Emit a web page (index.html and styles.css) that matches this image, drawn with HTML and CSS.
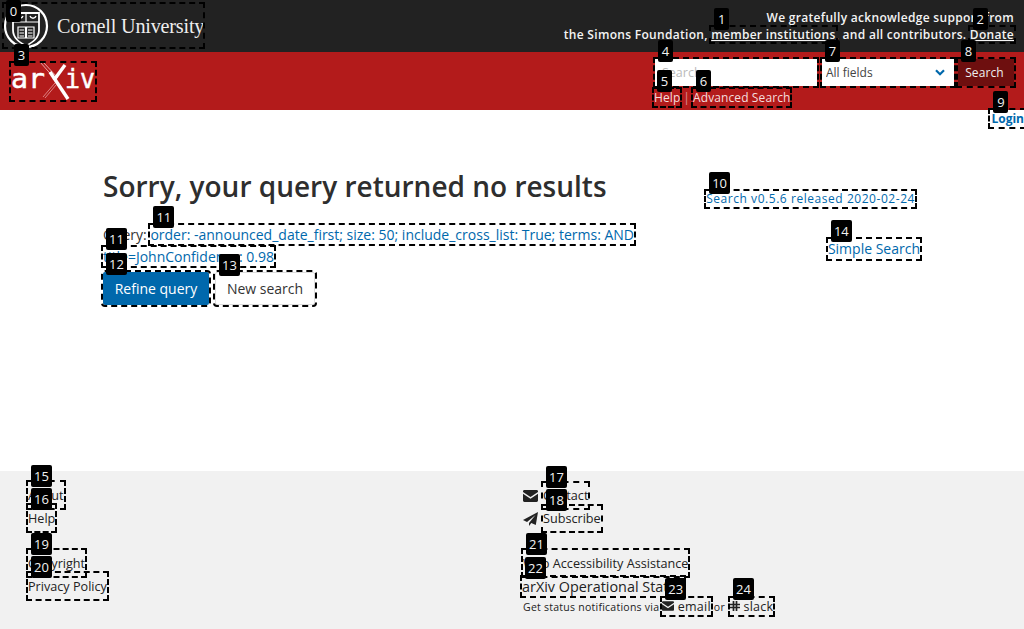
FILE: index.html
```html
<!DOCTYPE html>
<html lang="en">
<head>
<meta charset="utf-8">
<title>Search | arXiv e-print repository</title>
<link rel="stylesheet" href="styles.css">
</head>
<body>
<header class="site-head">
  <div class="top-bar">
    <a class="mark cornell" href="#"><span class="badge">0</span>
      <svg class="seal" width="46" height="46" viewBox="0 0 46 46" fill="none" stroke="#fff">
        <circle cx="23" cy="23" r="21" stroke-width="2.2"/>
        <path d="M10 10h26v17c0 8-6 12-13 16-7-4-13-8-13-16z" stroke-width="1.800"/>
        <path d="M10 19h26M23 10v9" stroke-width="1.200"/>
        <path d="M14 13c1 3 5 3 6 0M27 13c1 3 5 3 6 0" stroke-width="1.300"/>
        <path d="M15 24h7.500v11h-7.500zM23.500 24h7.500v11h-7.500z" stroke-width="1.200"/>
        <path d="M16.500 27h4.500M16.500 30h4.500M16.500 33h4.500M25 27h4.500M25 30h4.500M25 33h4.500" stroke-width="1"/>
      </svg>
      <span class="cornell-name">Cornell University</span>
    </a>
    <p class="thanks">We gratefully acknowledge support from<br>the Simons Foundation, <a class="mark light" href="#"><span class="badge">1</span>member institutions</a>, and all contributors. <a class="mark light" href="#"><span class="badge">2</span>Donate</a></p>
  </div>
  <div class="red-bar">
    <a class="mark logo" href="#"><span class="badge">3</span>
      <svg class="logo-art" width="84" height="37" viewBox="0 0 84 37">
        <text class="logo-text" x="0" y="25" textLength="34" lengthAdjust="spacingAndGlyphs">ar</text>
        <text class="logo-text" x="54" y="25" textLength="30" lengthAdjust="spacingAndGlyphs">iv</text>
        <path d="M29 -1 L45 17" stroke="#f5c9c9" stroke-width="0.800" fill="none"/>
        <path d="M31.500 -1.500 L47 15" stroke="#f5c9c9" stroke-width="0.800" fill="none"/>
        <path d="M32 34 L44 20" stroke="#e79a9a" stroke-width="0.800" fill="none"/>
        <path d="M34 35 L45 22" stroke="#e79a9a" stroke-width="0.800" fill="none"/>
        <path d="M43 17 L54 2" stroke="#fff" stroke-width="3.400" fill="none"/>
        <path d="M39 9 L57 36" stroke="#fff" stroke-width="3.400" fill="none"/>
      </svg>
    </a>
    <div class="search-area">
      <form class="search-row">
        <div class="mark field field-text"><span class="badge">4</span><input class="search-input" type="text" placeholder="Search..."></div>
        <div class="mark field field-select"><span class="badge">7</span>
          <select class="search-select"><option>All fields</option></select>
          <svg class="chevron" width="10" height="7" viewBox="0 0 10 7"><path d="M1 1.200l4 4 4-4" fill="none" stroke="#0068ac" stroke-width="2.200"/></svg>
        </div>
        <button class="mark search-btn" type="button"><span class="badge">8</span>Search</button>
      </form>
      <div class="search-links">
        <a class="mark" href="#"><span class="badge">5</span>Help</a>
        <span class="pipe">|</span>
        <a class="mark" href="#"><span class="badge">6</span>Advanced Search</a>
      </div>
    </div>
  </div>
</header>
<div class="login-row"><a class="mark login" href="#"><span class="badge">9</span>Login</a></div>
<main class="content">
  <section class="results">
    <h1 class="title">Sorry, your query returned no results</h1>
    <p class="query">Query: <a class="mark blue" href="#"><span class="badge">11</span>order: -announced_date_first; size: 50; include_cross_list: True; terms: AND</a><br><a class="mark blue" href="#"><span class="badge">11</span>title=JohnConfidence: 0.98</a></p>
    <div class="actions">
      <a class="mark btn btn-primary" href="#"><span class="badge">12</span>Refine query</a>
      <a class="mark btn btn-plain" href="#"><span class="badge">13</span>New search</a>
    </div>
  </section>
  <aside class="side">
    <a class="mark blue version" href="#"><span class="badge">10</span>Search v0.5.6 released 2020-02-24</a>
    <a class="mark blue simple" href="#"><span class="badge">14</span>Simple Search</a>
  </aside>
</main>
<footer class="site-foot">
  <div class="foot-col">
    <ul class="foot-list">
      <li><a class="mark" href="#"><span class="badge">15</span>About</a></li>
      <li><a class="mark" href="#"><span class="badge">16</span>Help</a></li>
    </ul>
    <ul class="foot-list">
      <li><a class="mark" href="#"><span class="badge">19</span>Copyright</a></li>
      <li><a class="mark" href="#"><span class="badge">20</span>Privacy Policy</a></li>
    </ul>
  </div>
  <div class="foot-col">
    <ul class="foot-list">
      <li class="icon-row">
        <svg class="foot-icon" width="15" height="12" viewBox="0 0 15 12"><path d="M1.400 0h12.200C14.400 0 15 .6 15 1.400v.5L7.500 7 0 1.900v-.5C0 .6.600 0 1.400 0zM0 3.700V10.600c0 .8.600 1.400 1.400 1.400h12.200c.8 0 1.400-.6 1.400-1.400V3.700L7.500 8.700z" fill="#222"/></svg>
        <a class="mark" href="#"><span class="badge">17</span>Contact</a>
      </li>
      <li class="icon-row">
        <svg class="foot-icon" width="15" height="14" viewBox="0 0 15 14"><path d="M15 0L12.800 13 8.300 11 6 14V11L12.500 3 4 10 0 8z" fill="#222"/></svg>
        <a class="mark" href="#"><span class="badge">18</span>Subscribe</a>
      </li>
    </ul>
    <ul class="foot-list">
      <li><a class="mark" href="#"><span class="badge">21</span>Web Accessibility Assistance</a></li>
      <li><a class="mark status-link" href="#"><span class="badge">22</span>arXiv Operational Status</a></li>
      <li class="status">Get status notifications via
        <a class="mark small-link" href="#"><span class="badge">23</span><svg width="12" height="10" viewBox="0 0 15 12"><path d="M1.400 0h12.200C14.400 0 15 .6 15 1.400v.5L7.500 7 0 1.900v-.5C0 .6.600 0 1.400 0zM0 3.700V10.600c0 .8.600 1.400 1.400 1.400h12.200c.8 0 1.400-.6 1.400-1.400V3.700L7.500 8.700z" fill="#222"/></svg> email</a>
        or
        <a class="mark small-link slack-link" href="#"><span class="badge">24</span><svg width="10" height="10" viewBox="0 0 10 10"><path d="M3.500 0v10M6.500 0v10M0 3.500h10M0 6.500h10" stroke="#222" stroke-width="1.700"/></svg> slack</a>
      </li>
    </ul>
  </div>
</footer>
</body>
</html>
```
FILE: styles.css
```css
* { box-sizing: border-box; }
html, body { margin: 0; height: 100%; }
body {
  display: flex;
  flex-direction: column;
  min-height: 629px;
  font-family: "Open Sans", "Liberation Sans", sans-serif;
  color: #222;
  background: #fff;
  overflow: hidden;
}
a { color: inherit; text-decoration: none; }
p, ul, h1 { margin: 0; padding: 0; }
ul { list-style: none; }

.mark { position: relative; outline: 2px dashed #000; outline-offset: 0; }
.badge {
  position: absolute;
  left: 3px;
  top: -19px;
  z-index: 5;
  min-width: 15px;
  height: 22px;
  padding: 0 3px;
  background: #000;
  border-radius: 2px;
  color: #f2f2f2;
  font: 400 13px/22px "Open Sans", sans-serif;
  letter-spacing: 0;
  text-align: center;
  text-decoration: none;
}

.top-bar {
  display: flex;
  justify-content: space-between;
  height: 52px;
  padding: 4px 10px 0 4px;
  background: #222;
  color: #fff;
}
.cornell { display: flex; align-items: center; gap: 8px; width: 199px; height: 43px; }
.cornell .badge { top: -4px; left: 2px; }
.seal { flex: none; margin-left: -1px; }
.cornell-name { margin-top: 1px; font: 400 20.200px "Liberation Serif", serif; letter-spacing: -.2px; color: #eee; white-space: nowrap; }
.thanks { padding-top: 5px; text-align: right; font-size: 12px; font-weight: 600; line-height: 17px; letter-spacing: .3px; color: #f4f4f4; }
.light { text-decoration: underline; display: inline-block; line-height: 15px; }

.red-bar {
  display: flex;
  justify-content: space-between;
  height: 58px;
  padding: 6px 10px 0 11px;
  background: #b31b1b;
  color: #fff;
}
.logo { width: 84px; height: 37px; margin-top: 5px; display: block; }
.logo-art { display: block; overflow: visible; }
.logo-text { font: 400 27px "DejaVu Sans Mono", monospace; fill: #fff; stroke: #fff; stroke-width: .5px; }

.search-area { width: 359px; }
.search-row { display: flex; gap: 4px; height: 27px; margin-top: 1px; }
.field { height: 27px; background: #fff; }
.field-text { width: 162px; margin-right: 1px; }
.field-select { width: 132px; }
.search-input { display: block; width: 100%; height: 27px; border: 0; outline: 0; padding: 0 7px; font: 400 12.500px "Open Sans", sans-serif; background: #fff; }
.search-input::placeholder { color: #bbb; }
.search-select { display: block; width: 100%; height: 27px; border: 0; outline: 0; appearance: none; -webkit-appearance: none; background: #fff; padding: 0 4px; font: 400 12px "Open Sans", sans-serif; color: #444; }
.chevron { position: absolute; right: 9px; top: 10px; pointer-events: none; }
.search-btn { width: 56px; height: 27px; padding: 0 3px 0 0; border: 0; background: #6e0f0f; color: #eee; font: 400 12px "Open Sans", sans-serif; letter-spacing: .1px; }
.search-links { display: flex; align-items: center; gap: 3px; margin: 3px 0 0 -1px; font-size: 12px; color: #f3dede; letter-spacing: .1px; height: 17px; }
.pipe { opacity: .6; }

.login-row { display: flex; justify-content: flex-end; height: 18px; font-size: 12px; font-weight: 700; color: #0068ac; }
.login { padding-left: 1px; height: 17px; line-height: 18px; }

.content { flex: 1; display: flex; justify-content: space-between; padding: 0 102px 0 103px; }
.results { width: 540px; }
.title { margin-top: 38px; font-size: 28px; line-height: 40px; font-weight: 600; color: #2e2e2e; }
.query { margin-top: 18px; font-size: 14px; line-height: 22px; color: #333; }
.blue { color: #0068ac; }
.actions { display: flex; gap: 6px; margin-top: 4px; }
.btn { display: block; height: 33px; line-height: 33px; font-size: 14px; border-radius: 2px; text-align: center; }
.btn-primary { background: #0068ac; color: #fff; width: 106px; }
.btn-plain { background: #fff; border: 1px solid #ddd; color: #333; line-height: 31px; width: 100px; }
.side { display: flex; flex-direction: column; align-items: flex-end; }
.version { margin: 63px 7px 0 0; font-size: 12px; line-height: 16px; letter-spacing: .55px; }
.simple { margin: 32px 2px 0 0; font-size: 14px; line-height: 20px; }

.site-foot { height: 158px; display: flex; background: #f1f1f1; font-size: 12.650px; color: #222; padding: 13px 0 0 28px; }
.foot-col { width: 495px; }
.foot-list { margin-bottom: 22px; }
.foot-list li { height: 23px; line-height: 23px; }
.foot-list a.mark { padding: 4px 0; }
.foot-list .badge { top: -17px; }
.icon-row { display: flex; align-items: center; gap: 5px; }
.foot-list .icon-row a.mark { line-height: 17px; }
.foot-icon { flex: none; }
.foot-list a.status-link { padding: 0; font-size: 14.400px; margin-left: -1px; }
.foot-list li.status { height: 17px; line-height: 17px; font-size: 10.500px; letter-spacing: .25px; white-space: nowrap; }
.foot-list a.small-link { padding: 0; font-size: 12.500px; }
.foot-list .status-link .badge, .foot-list .small-link .badge { top: -20px; }
.slack-link { margin-left: 2px; }
```
